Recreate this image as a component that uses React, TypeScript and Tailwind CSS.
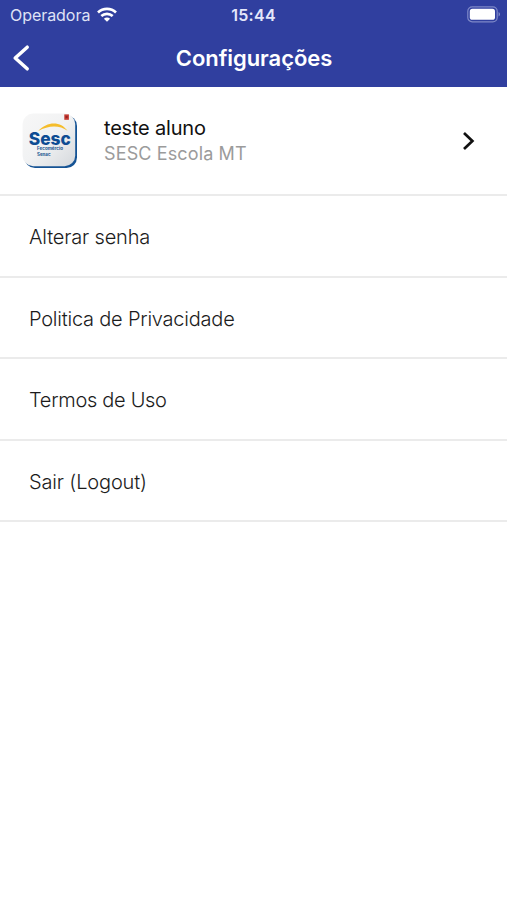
import React from 'react';

interface MenuItem {
  id: string;
  label: string;
  className: string;
}

const MENU_ITEMS: MenuItem[] = [
  { id: 'password', label: 'Alterar senha', className: 'tracking-[-0.17px]' },
  { id: 'privacy', label: 'Politica de Privacidade', className: 'tracking-[-0.22px]' },
  { id: 'terms', label: 'Termos de Uso', className: 'tracking-[-0.3px]' },
  { id: 'logout', label: 'Sair (Logout)', className: 'tracking-[-0.15px]' },
];

const WifiIcon: React.FC = () => (
  <svg width="20" height="15" viewBox="0 0 20 15" fill="none" stroke="#fff" strokeWidth="2.7">
    <path d="M1 5.4C6 .7 14 .7 19 5.4" />
    <path d="M4.3 9.1C7.5 6.2 12.5 6.2 15.7 9.1" />
    <path d="M10 14.8 6.9 11.7C8.7 10.2 11.3 10.2 13.1 11.7Z" fill="#fff" stroke="none" />
  </svg>
);

const BatteryIcon: React.FC = () => (
  <svg width="34" height="17" viewBox="0 0 34 17" fill="none">
    <rect x="0.8" y="0.8" width="29.4" height="15" rx="4.4" stroke="#7e88c8" strokeWidth="1.2" />
    <rect x="2.8" y="2.8" width="25.2" height="11" rx="2.6" fill="#fff" />
    <path d="M31.6 6.1c1.8.8 1.8 3.6 0 4.4Z" fill="#8b94cf" />
  </svg>
);

const SchoolLogo: React.FC = () => (
  <svg width="56" height="56" viewBox="0 0 56 56">
    <defs>
      <linearGradient id="tile" x1="0" y1="0" x2="1" y2="1">
        <stop offset="0" stopColor="#f7f7f7" />
        <stop offset="0.5" stopColor="#f1f2f3" />
        <stop offset="1" stopColor="#d5d8dc" />
      </linearGradient>
    </defs>
    <rect x="2.5" y="2.5" width="52.5" height="52.5" rx="10.5" fill="#155394" />
    <rect x="0.6" y="0.6" width="52.6" height="52.6" rx="10.5" fill="url(#tile)" />
    <rect x="42.3" y="1.4" width="4.6" height="5.4" fill="#c43a30" />
    <path d="M43.6 3.2h2v1.6h-2z" fill="#8c1d22" />
    <path d="M16.2 18C25 8.2 38.5 7.6 45.6 17.8 37.5 11.8 26.5 12.2 16.2 18Z" fill="#f5bd2b" />
    <text
      x="6.8"
      y="31.6"
      fill="#0d4c93"
      fontFamily="Inter, sans-serif"
      fontSize="17.5"
      fontWeight="800"
      textLength="42"
      lengthAdjust="spacingAndGlyphs"
    >
      Sesc
    </text>
    <g fill="#21558f" fontFamily="Inter, sans-serif" fontWeight="700">
      <text x="15" y="37.2" fontSize="4.2" textLength="26" lengthAdjust="spacingAndGlyphs">Fecomércio</text>
      <text x="15" y="42.8" fontSize="4.2" textLength="13.6" lengthAdjust="spacingAndGlyphs">Senac</text>
    </g>
  </svg>
);

const App: React.FC = () => {
  return (
    <div className="min-h-screen w-full bg-white font-['Inter',sans-serif]">
      {/* Header */}
      <header className="h-[87px] bg-[#303f9f] text-white">
        <div className="grid h-[29px] grid-cols-3 items-center">
          <div className="flex items-center gap-[7px] pl-[10px] text-[16px] tracking-[-0.05px] text-[#dfe2f5]">
            <span>Operadora</span>
            <WifiIcon />
          </div>
          <span className="text-center text-[16px] font-semibold tracking-[0.3px] text-[#e4e7fa]">15:44</span>
          <div className="flex justify-end pr-[6px]">
            <BatteryIcon />
          </div>
        </div>
        <div className="grid h-[58px] grid-cols-[60px_1fr_60px] items-center">
          <button aria-label="Voltar" className="pl-[12px]">
            <svg width="18" height="28" viewBox="0 0 18 28" fill="none" stroke="#fff" strokeWidth="3.5" strokeLinecap="round" strokeLinejoin="round">
              <path d="M15.2 3.2 3.2 14 15.2 24.8" />
            </svg>
          </button>
          <h1 className="pl-px text-center text-[22px] font-semibold tracking-[-0.05px]">Configurações</h1>
        </div>
      </header>

      {/* Profile */}
      <button className="flex h-[109px] w-full items-center border-b-2 border-[#ebebeb] pl-[22px] pr-[30px] text-left">
        <SchoolLogo />
        <div className="ml-[26px] flex-1">
          <p className="text-[20px] leading-[26px] tracking-[-0.2px] text-[#111]">teste aluno</p>
          <p className="text-[18px] leading-[26px] tracking-[0.13px] text-[#9b9b9b]">SESC Escola MT</p>
        </div>
        <svg width="16" height="20" viewBox="0 0 16 20" fill="none" stroke="#111" strokeWidth="2.7">
          <path d="m3 2 8.4 8L3 18" />
        </svg>
      </button>

      {/* Options */}
      <nav>
        {MENU_ITEMS.map((item) => (
          <button
            key={item.id}
            className="flex h-[81.5px] w-full items-center border-b-2 border-[#ebebeb] pt-[3px] pl-[29px] text-[20px] font-light text-[#1c1c1c]"
          >
            <span className={item.className}>{item.label}</span>
          </button>
        ))}
      </nav>
    </div>
  );
};

export default App;
